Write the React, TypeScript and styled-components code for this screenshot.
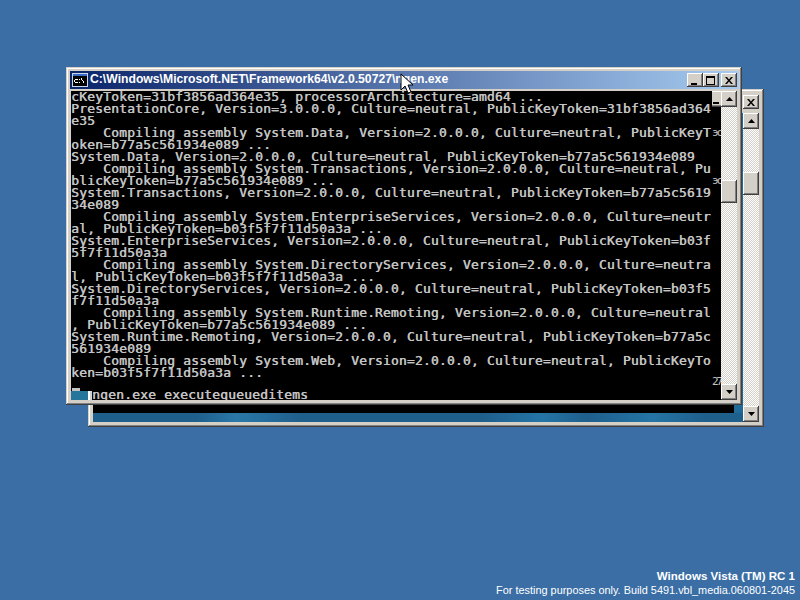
import React from "react";
import styled, { createGlobalStyle } from "styled-components";

const LOG_LINES = [
  "cKeyToken=31bf3856ad364e35, processorArchitecture=amd64 ...",
  "PresentationCore, Version=3.0.0.0, Culture=neutral, PublicKeyToken=31bf3856ad364",
  "e35",
  "    Compiling assembly System.Data, Version=2.0.0.0, Culture=neutral, PublicKeyT",
  "oken=b77a5c561934e089 ...",
  "System.Data, Version=2.0.0.0, Culture=neutral, PublicKeyToken=b77a5c561934e089",
  "    Compiling assembly System.Transactions, Version=2.0.0.0, Culture=neutral, Pu",
  "blicKeyToken=b77a5c561934e089 ...",
  "System.Transactions, Version=2.0.0.0, Culture=neutral, PublicKeyToken=b77a5c5619",
  "34e089",
  "    Compiling assembly System.EnterpriseServices, Version=2.0.0.0, Culture=neutr",
  "al, PublicKeyToken=b03f5f7f11d50a3a ...",
  "System.EnterpriseServices, Version=2.0.0.0, Culture=neutral, PublicKeyToken=b03f",
  "5f7f11d50a3a",
  "    Compiling assembly System.DirectoryServices, Version=2.0.0.0, Culture=neutra",
  "l, PublicKeyToken=b03f5f7f11d50a3a ...",
  "System.DirectoryServices, Version=2.0.0.0, Culture=neutral, PublicKeyToken=b03f5",
  "f7f11d50a3a",
  "    Compiling assembly System.Runtime.Remoting, Version=2.0.0.0, Culture=neutral",
  ", PublicKeyToken=b77a5c561934e089 ...",
  "System.Runtime.Remoting, Version=2.0.0.0, Culture=neutral, PublicKeyToken=b77a5c",
  "561934e089",
  "    Compiling assembly System.Web, Version=2.0.0.0, Culture=neutral, PublicKeyTo",
  "ken=b03f5f7f11d50a3a ...",
];

const GlobalStyle = createGlobalStyle`
  html, body {
    margin: 0;
    padding: 0;
    background: #3a6ea5;
  }
`;

const Desktop = styled.div`
  position: relative;
  width: 800px;
  height: 600px;
  overflow: hidden;
  background: #3a6ea5;
`;

const Watermark = styled.div`
  position: absolute;
  right: 5px;
  bottom: 3px;
  text-align: right;
  color: #fff;
  font-family: "Liberation Sans", Arial, sans-serif;
  font-size: 10.900px;
  line-height: 14px;
`;

const WatermarkTitle = styled.div`
  font-weight: 700;
  font-size: 11.550px;
`;

const Window = styled.div<{ $left: number; $top: number }>`
  position: absolute;
  left: ${(p) => p.$left}px;
  top: ${(p) => p.$top}px;
  width: 676px;
  height: 338px;
  box-sizing: border-box;
  padding: 4px 3px 5px 4px;
  display: flex;
  flex-direction: column;
  background: #d4d0c8;
  box-shadow:
    inset -1px -1px 0 #404040,
    inset 1px 1px 0 #d4d0c8,
    inset -2px -2px 0 #808080,
    inset 2px 2px 0 #fff;
`;

const TitleBar = styled.div`
  height: 18px;
  flex: none;
  display: flex;
  align-items: center;
  padding: 0 2px;
  margin-bottom: 2px;
  background: linear-gradient(90deg, #0a246a, #a6caf0);
`;

const BackTitleBar = styled(TitleBar)`
  background: #d4d0c8;
  justify-content: flex-end;
`;

const TitleText = styled.div`
  margin-left: 2px;
  flex: 1;
  color: #fff;
  font-family: "Liberation Sans", Arial, sans-serif;
  font-weight: 700;
  font-size: 12.200px;
  line-height: 16px;
  margin-top: -2px;
  white-space: nowrap;
`;

const CaptionButton = styled.div`
  width: 16px;
  height: 14px;
  box-sizing: border-box;
  display: flex;
  align-items: center;
  justify-content: center;
  background: #d4d0c8;
  box-shadow:
    inset -1px -1px 0 #404040,
    inset 1px 1px 0 #fff,
    inset -2px -2px 0 #808080;
`;

const CloseButton = styled(CaptionButton)`
  margin-left: 2px;
`;

const ClientArea = styled.div`
  flex: 1;
  min-height: 0;
  display: flex;
  margin: 0 2px 0 1px;
`;

const Console = styled.pre`
  margin: 0;
  flex: 1;
  min-width: 0;
  overflow: hidden;
  padding: 0;
  background: #000;
  color: #c4c4c4;
  font-family: "DejaVu Sans Mono", "Liberation Mono", monospace;
  font-size: 13px;
  letter-spacing: 0.17px;
  line-height: 12px;
  text-shadow: 0.5px 0 0 #c4c4c4;
`;

const BackClient = styled(ClientArea)`
  background: #1f6a99;
`;

const BackPane = styled.div`
  flex: 1;
  min-width: 0;
  display: flex;
  flex-direction: column;
`;

const BackConsole = styled(Console)`
  flex: 1;
  margin-right: 9px;
`;

const WallpaperStrip = styled.div`
  height: 9px;
  flex: none;
  background: linear-gradient(
    90deg,
    #1f5f8c 0%,
    #1f5f8c 16%,
    #2a78a8 22%,
    #1f5f8c 32%,
    #1f5f8c 60%,
    #2475a5 69%,
    #1f5f8c 76%,
    #2475a5 86%,
    #1f5f8c 94%,
    #1f5f8c 100%
  );
`;

const ScrollBar = styled.div`
  width: 16px;
  flex: none;
  display: flex;
  flex-direction: column;
  background-color: #fff;
  background-image: conic-gradient(#d4d0c8 25%, #fff 0 50%, #d4d0c8 0 75%, #fff 0);
  background-size: 2px 2px;
`;

const ScrollButton = styled.div`
  width: 16px;
  height: 16px;
  flex: none;
  display: flex;
  align-items: center;
  justify-content: center;
  background: #d4d0c8;
  box-shadow:
    inset -1px -1px 0 #404040,
    inset 1px 1px 0 #fff,
    inset -2px -2px 0 #808080;
`;

const ScrollTrack = styled.div<{ $before: number }>`
  flex: 1;
  padding-top: ${(p) => p.$before}px;
`;

const ScrollThumb = styled(ScrollButton)`
  height: 23px;
`;

const StaleGlyphs = styled.div<{ $top: number }>`
  position: absolute;
  left: 712px;
  top: ${(p) => p.$top}px;
  width: 9px;
  height: 12px;
  overflow: hidden;
  white-space: nowrap;
  color: #c4c4c4;
  font-family: "DejaVu Sans Mono", monospace;
  font-size: 11px;
  letter-spacing: -2px;
  line-height: 12px;
  background: #000;
`;

const StaleButton = styled.div`
  position: absolute;
  left: 712px;
  top: 91px;
  width: 9px;
  height: 16px;
  background: #d4d0c8;
  box-shadow: inset 0 -1px 0 #404040, inset 0 -2px 0 #808080, inset 0 1px 0 #fff;
  &::after {
    content: "";
    position: absolute;
    left: 1px;
    bottom: 3px;
    width: 6px;
    height: 2px;
    background: #000;
  }
`;

const BehindPatch = styled.div`
  position: absolute;
  left: 71px;
  top: 391px;
  width: 17px;
  height: 9px;
  background: #26759a;
  &::before {
    content: "";
    position: absolute;
    left: 1px;
    top: -3px;
    width: 8px;
    height: 3px;
    background: #c4c4c4;
  }
`;

const BackEdge = styled.div`
  position: absolute;
  left: 88px;
  top: 391px;
  width: 4px;
  height: 9px;
  background: #d4d0c8;
  box-shadow: inset 2px 0 0 #fff;
`;

const PromptLine = styled.pre`
  position: absolute;
  left: 92px;
  top: 389px;
  width: 620px;
  height: 11px;
  margin: 0;
  overflow: hidden;
  background: #000;
  color: #c4c4c4;
  font-family: "DejaVu Sans Mono", monospace;
  font-size: 13px;
  letter-spacing: 0.17px;
  line-height: 12px;
  text-shadow: 0.5px 0 0 #c4c4c4;
`;

const Cursor = styled.svg`
  position: absolute;
  left: 400px;
  top: 73px;
`;

const MinGlyph = () => (
  <svg width="10" height="9" viewBox="0 0 10 9">
    <rect x="1" y="7" width="6" height="2" fill="#000" />
  </svg>
);

const MaxGlyph = () => (
  <svg width="10" height="9" viewBox="0 0 10 9">
    <path d="M0 0h9v9H0zM1 2v6h7V2z" fill="#000" fillRule="evenodd" />
  </svg>
);

const CloseGlyph = () => (
  <svg width="8" height="7" viewBox="0 0 8 7">
    <path d="M0 0h2l2 2.500L6 0h2L5 3.500 8 7H6L4 4.500 2 7H0l3-3.500z" fill="#000" />
  </svg>
);

const Arrow = ({ up }: { up?: boolean }) => (
  <svg width="7" height="4" viewBox="0 0 7 4">
    <path d={up ? "M3.500 0L7 4H0z" : "M0 0h7L3.500 4z"} fill="#000" />
  </svg>
);

const ConsoleIcon = () => (
  <svg width="16" height="14" viewBox="0 0 16 14" shapeRendering="crispEdges">
    <rect x="0" y="0" width="16" height="14" fill="#c8d4e8" />
    <rect x="1" y="1" width="14" height="2" fill="#3a6ac8" />
    <rect x="1" y="3" width="14" height="10" fill="#000" />
    <path
      d="M3 6h3v1H3zM2 7h1v2H2zM3 9h3v1H3zM7 6h1v1H7zM7 9h1v1H7zM9 5h1v2H9zM10 7h1v1h-1zM11 8h1v2h-1z"
      fill="#fff"
    />
  </svg>
);

export default function App() {
  return (
    <Desktop>
      <GlobalStyle />

      <Window $left={88} $top={89}>
        <BackTitleBar>
          <CloseButton>
            <CloseGlyph />
          </CloseButton>
        </BackTitleBar>
        <BackClient>
          <BackPane>
            <BackConsole />
            <WallpaperStrip />
          </BackPane>
          <ScrollBar>
            <ScrollButton>
              <Arrow up />
            </ScrollButton>
            <ScrollTrack $before={43}>
              <ScrollThumb />
            </ScrollTrack>
            <ScrollButton>
              <Arrow />
            </ScrollButton>
          </ScrollBar>
        </BackClient>
      </Window>

      <Window $left={66} $top={67}>
        <TitleBar>
          <ConsoleIcon />
          <TitleText>C:\Windows\Microsoft.NET\Framework64\v2.0.50727\ngen.exe</TitleText>
          <CaptionButton>
            <MinGlyph />
          </CaptionButton>
          <CaptionButton>
            <MaxGlyph />
          </CaptionButton>
          <CloseButton>
            <CloseGlyph />
          </CloseButton>
        </TitleBar>
        <ClientArea>
          <Console>{LOG_LINES.join("\n")}</Console>
          <ScrollBar>
            <ScrollButton>
              <Arrow up />
            </ScrollButton>
            <ScrollTrack $before={73}>
              <ScrollThumb />
            </ScrollTrack>
            <ScrollButton>
              <Arrow />
            </ScrollButton>
          </ScrollBar>
        </ClientArea>
      </Window>

      <StaleButton />
      <StaleGlyphs $top={127}>эc</StaleGlyphs>
      <StaleGlyphs $top={175}>эc</StaleGlyphs>
      <StaleGlyphs $top={376}>27</StaleGlyphs>
      <BehindPatch />
      <BackEdge />
      <PromptLine>ngen.exe executequeueditems</PromptLine>

      <Cursor width="14" height="22" viewBox="0 0 14 22">
        <path d="M1 1v16l4-4 3 7 3-1-3-7h5z" fill="#fff" stroke="#000" strokeWidth="1" />
      </Cursor>

      <Watermark>
        <WatermarkTitle>Windows Vista (TM) RC 1</WatermarkTitle>
        <div>For testing purposes only. Build 5491.vbl_media.060801-2045</div>
      </Watermark>
    </Desktop>
  );
}
